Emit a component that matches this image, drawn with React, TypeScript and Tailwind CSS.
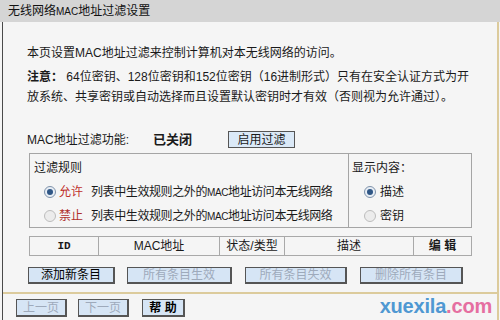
import React from "react";

const Radio = ({ checked }: { checked?: boolean }) => (
  <span
    className={`inline-flex items-center justify-center w-[12px] h-[12px] rounded-full border ${
      checked ? "border-[#7f93ab] bg-[#e8eef5]" : "border-[#bdbdbd] bg-[#ececec]"
    }`}
  >
    {checked && <span className="w-[6px] h-[6px] rounded-full bg-[#2f5685]" />}
  </span>
);

const Btn = ({
  children,
  disabled,
  className = "",
}: {
  children: React.ReactNode;
  disabled?: boolean;
  className?: string;
}) => (
  <div
    className={`flex items-center justify-center bg-[#d6e5f5] border border-[#555] border-r-2 border-b-2 text-[12px] leading-none ${
      disabled ? "text-[#9eaabb]" : "text-black"
    } ${className}`}
  >
    {children}
  </div>
);

export default function App() {
  return (
    <div className="w-[500px] h-[320px] bg-[#f5f5f5] flex flex-col text-[#1a1a1a] font-['Liberation_Sans','Noto_Sans_CJK_SC',sans-serif] relative overflow-hidden">
      <div className="h-[22px] shrink-0 bg-[#d5d5d5] pl-[8px] text-[12px] leading-[22px] text-[#111]">
        无线网络<span className="text-[10px]">MAC</span>地址过滤设置
      </div>

      <div className="flex-1 ml-[2px] mr-[1px] border-l border-l-[#4a4a4a] border-r-2 border-r-[#dccb9c] flex flex-col">
        <div className="pl-[24px] pt-[22px] text-[12px] whitespace-nowrap">
          <div className="leading-[18px]">本页设置MAC地址过滤来控制计算机对本无线网络的访问。</div>
          <div className="mt-[5px] leading-[20px]">
            <span className="font-bold">注意：</span> 64位密钥、128位密钥和152位密钥（16进制形式）只有在安全认证方式为开
            <br />
            放系统、共享密钥或自动选择而且设置默认密钥时才有效（否则视为允许通过）。
          </div>
        </div>

        <div className="mt-[24px] ml-[24px] flex items-center h-[17px] text-[12px]">
          <span className="w-[126px]">MAC地址过滤功能:</span>
          <span className="w-[75px] font-bold text-[13px]">已关闭</span>
          <div className="w-[67px] h-[17px] flex items-center justify-center bg-[#dbe9f7] border border-[#555] text-[12px]">
            启用过滤
          </div>
        </div>

        <div className="mt-[5px] ml-[26px] w-[443px] h-[75px] flex border border-[#a5a5a5] text-[12px]">
          <div className="w-[318px] pl-[4px] pt-[6px] flex flex-col">
            <div className="leading-[16px]">过滤规则</div>
            <div className="mt-[8px] flex items-center h-[16px] pl-[10px] gap-[3px] text-[12px]">
              <Radio checked />
              <span className="text-[#c0302b]">允许</span>
              <span className="ml-[5px] tracking-[-0.4px]">
                列表中生效规则之外的<span className="text-[10px]">MAC</span>地址访问本无线网络
              </span>
            </div>
            <div className="mt-[8px] flex items-center h-[16px] pl-[10px] gap-[3px] text-[12px]">
              <Radio />
              <span className="text-[#b0302b]">禁止</span>
              <span className="ml-[5px] tracking-[-0.4px]">
                列表中生效规则之外的<span className="text-[10px]">MAC</span>地址访问本无线网络
              </span>
            </div>
          </div>
          <div className="flex-1 border-l border-l-[#a5a5a5] pl-[3px] pt-[6px] flex flex-col">
            <div className="leading-[16px]">显示内容：</div>
            <div className="mt-[8px] flex items-center h-[16px] pl-[12px] gap-[4px]">
              <Radio checked />
              <span>描述</span>
            </div>
            <div className="mt-[8px] flex items-center h-[16px] pl-[12px] gap-[4px]">
              <Radio />
              <span>密钥</span>
            </div>
          </div>
        </div>

        <div className="mt-[8px] ml-[26px] w-[443px] h-[20px] flex border border-[#a9a9a9] text-[12px]">
          <div className="w-[68px] flex items-center justify-center font-bold font-['Liberation_Mono',monospace] text-[11px]">ID</div>
          <div className="w-[121px] border-l border-l-[#a9a9a9] flex items-center justify-center">MAC地址</div>
          <div className="w-[65px] border-l border-l-[#a9a9a9] flex items-center justify-center">状态/类型</div>
          <div className="w-[129px] border-l border-l-[#a9a9a9] flex items-center justify-center">描述</div>
          <div className="flex-1 border-l border-l-[#a9a9a9] flex items-center justify-center font-bold">编 辑</div>
        </div>

        <div className="mt-[11px] ml-[25px] flex h-[17px]">
          <Btn className="w-[87px]">添加新条目</Btn>
          <Btn disabled className="w-[105px] ml-[12px]">所有条目生效</Btn>
          <Btn disabled className="w-[102px] ml-[13px]">所有条目失效</Btn>
          <Btn disabled className="w-[103px] ml-[13px]">删除所有条目</Btn>
        </div>

        <div className="mt-[8px] h-[2px] bg-[#dccb9c]" />

        <div className="mt-[5px] ml-[13px] flex h-[18px]">
          <Btn disabled className="w-[51px]">上一页</Btn>
          <Btn disabled className="w-[51px] ml-[11px]">下一页</Btn>
          <Btn className="w-[43px] ml-[13px] font-bold">帮 助</Btn>
        </div>
      </div>

      <div className="absolute right-[8px] bottom-[1px] text-[20px] font-bold leading-[26px] font-['Liberation_Sans',sans-serif] tracking-[-0.2px]">
        <span className="text-[#4f98d2]">xuexila</span>
        <span className="text-[#e56fa1]">.com</span>
      </div>
    </div>
  );
}
